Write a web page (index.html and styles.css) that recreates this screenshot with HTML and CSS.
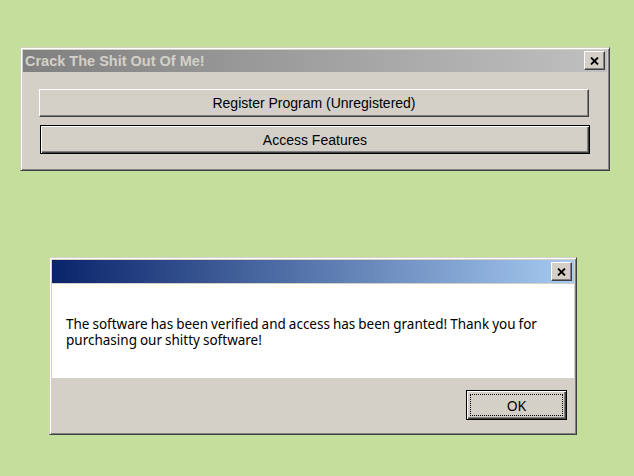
FILE: index.html
```html
<!DOCTYPE html>
<html>
<head>
<meta charset="utf-8">
<link rel="stylesheet" href="styles.css">
</head>
<body>
<div class="desktop">
  <div class="win win-main">
    <div class="titlebar inactive">
      <span class="title">Crack The Shit Out Of Me!</span>
      <button class="cap-btn" aria-label="Close">
        <svg width="9" height="8" viewBox="0 0 9 8"><path d="M1 0.5 L8 7.5 M8 0.5 L1 7.5" stroke="#000" stroke-width="1.8" fill="none"/></svg>
      </button>
    </div>
    <div class="main-body">
      <button class="btn btn-wide">Register Program (Unregistered)</button>
      <button class="btn btn-wide btn-default btn-shift">Access Features</button>
    </div>
  </div>

  <div class="win win-msg">
    <div class="titlebar active">
      <span class="title"></span>
      <button class="cap-btn" aria-label="Close">
        <svg width="9" height="8" viewBox="0 0 9 8"><path d="M1 0.5 L8 7.5 M8 0.5 L1 7.5" stroke="#000" stroke-width="1.8" fill="none"/></svg>
      </button>
    </div>
    <div class="msg-text">
      <p><span class="line">The software has been verified and access has been granted! Thank you for</span><span class="line">purchasing our shitty software!</span></p>
    </div>
    <div class="msg-actions">
      <button class="btn btn-ok btn-default"><span class="focus">OK</span></button>
    </div>
  </div>
</div>
</body>
</html>
```
FILE: styles.css
```css
html, body {
  margin: 0;
  padding: 0;
}
body {
  background: #c4df9b;
  width: 634px;
  height: 476px;
  overflow: hidden;
  font-family: "Liberation Sans", Arial, sans-serif;
}
.desktop {
  position: relative;
  width: 634px;
  height: 476px;
}
.win {
  position: absolute;
  box-sizing: border-box;
  background: #d4d0c8;
  border: 1px solid;
  border-color: #d4d0c8 #404040 #404040 #d4d0c8;
  box-shadow: inset 1px 1px #ffffff, inset -1px -1px #808080;
  padding: 2px;
  display: flex;
  flex-direction: column;
}
.win-main {
  left: 20px;
  top: 47px;
  width: 590px;
  height: 124px;
}
.win-msg {
  left: 49px;
  top: 257px;
  width: 528px;
  height: 178px;
}
.titlebar {
  display: flex;
  align-items: flex-start;
  justify-content: space-between;
}
.win-main .titlebar {
  height: 22px;
}
.win-msg .titlebar {
  height: 23px;
  margin-bottom: 1px;
}
.titlebar.inactive {
  background: linear-gradient(to right, #808080, #c0c0c0);
}
.titlebar.active {
  background: linear-gradient(to right, #0a246a, #a6caf0);
}
.title {
  font-family: "Liberation Sans", Arial, sans-serif;
  font-weight: bold;
  font-size: 14.5px;
  line-height: 22px;
  padding-left: 2px;
  color: #d4d0c8;
  white-space: nowrap;
}
.cap-btn {
  box-sizing: border-box;
  width: 21px;
  height: 19px;
  margin: 1px 2px 0 0;
  padding: 0;
  background: #d4d0c8;
  border: 1px solid;
  border-color: #ffffff #404040 #404040 #ffffff;
  box-shadow: inset -1px -1px #808080;
  display: flex;
  align-items: center;
  justify-content: center;
}
.win-msg .cap-btn {
  margin-top: 2px;
}
.main-body {
  flex: 1;
  display: flex;
  flex-direction: column;
  align-items: flex-start;
  padding: 17px 0 0 16px;
}
.btn {
  box-sizing: border-box;
  background: #d4d0c8;
  border: 1px solid;
  border-color: #ffffff #404040 #404040 #ffffff;
  box-shadow: inset -1px -1px #808080;
  font-family: "Liberation Sans", Arial, sans-serif;
  font-size: 14px;
  color: #000;
  padding: 0;
  margin: 0;
}
.btn-wide {
  width: 550px;
  height: 28px;
}
.btn-default {
  border: 1px solid #000;
  box-shadow: inset 1px 1px #ffffff, inset -1px -1px #404040, inset -2px -2px #808080;
}
.btn-shift {
  margin-top: 8px;
  margin-left: 1px;
  height: 29px;
}
.msg-text {
  background: #ffffff;
  height: 94px;
  box-sizing: border-box;
  padding: 0 0 0 14px;
}
.msg-text p {
  margin: 0;
  padding-top: 32px;
  display: flex;
  flex-direction: column;
  font-family: "Noto Sans", "Liberation Sans", sans-serif;
  font-size: 13.5px;
  line-height: 16px;
  word-spacing: -0.5px;
  color: #000;
}
.line {
  display: block;
  height: 16px;
  white-space: nowrap;
}
.msg-actions {
  flex: 1;
  display: flex;
  justify-content: flex-end;
  align-items: flex-start;
  padding: 12px 7px 0 0;
}
.btn-ok {
  width: 101px;
  height: 30px;
  padding: 3px;
  display: flex;
}
.focus {
  flex: 1;
  border: 1px dotted #000;
  display: flex;
  align-items: center;
  justify-content: center;
  font-family: "Noto Sans", "Liberation Sans", sans-serif;
  font-size: 14px;
}
```
